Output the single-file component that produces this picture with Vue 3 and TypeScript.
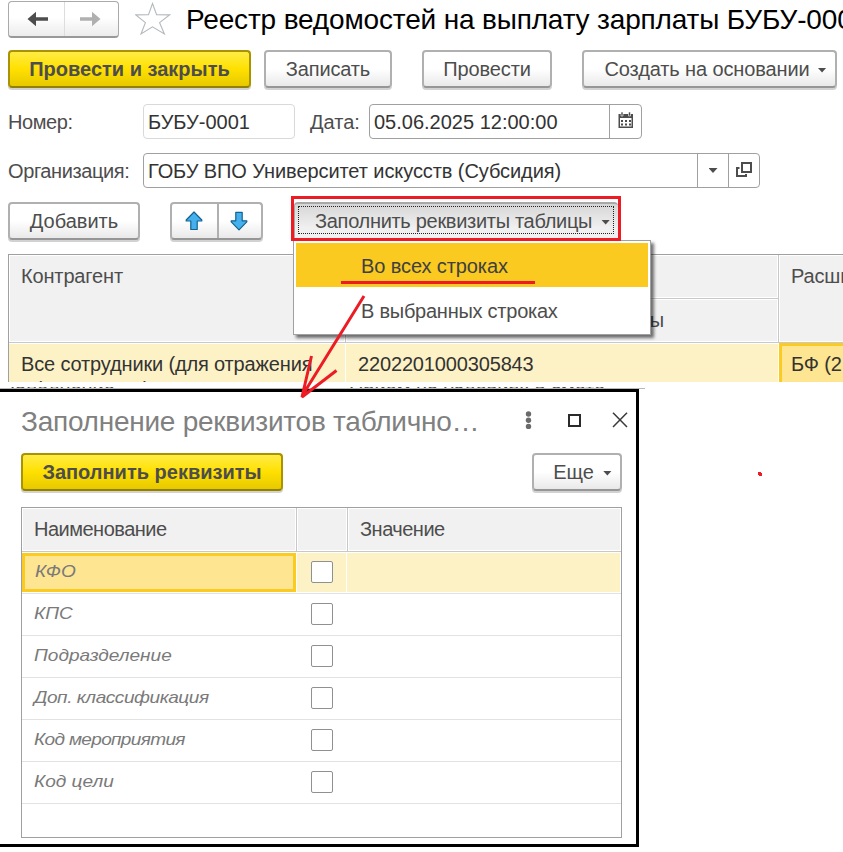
<script setup lang="ts">
import { ref } from 'vue'

interface Requisite {
  name: string
  checked: boolean
}

const requisites = ref<Requisite[]>([
  { name: 'КФО', checked: false },
  { name: 'КПС', checked: false },
  { name: 'Подразделение', checked: false },
  { name: 'Доп. классификация', checked: false },
  { name: 'Код мероприятия', checked: false },
  { name: 'Код цели', checked: false },
])
const selected = ref(0)
</script>

<template>
  <div class="page">
    <header class="title-row">
      <div class="nav">
        <button class="nav-btn">
          <svg width="22" height="16" viewBox="0 0 22 16"><path d="M0.5 8 L9 0.8 V6.2 H21 V9.8 H9 V15.2 Z" fill="#4d4d4d" /></svg>
        </button>
        <button class="nav-btn">
          <svg width="22" height="16" viewBox="0 0 22 16"><path d="M21.5 8 L13 0.8 V6.2 H1 V9.8 H13 V15.2 Z" fill="#b0b0b0" /></svg>
        </button>
      </div>
      <svg class="star" width="36" height="34" viewBox="0 0 36 34">
        <path d="M17.5 1.5 L21.6 12.8 L34.5 12.9 L24.6 20.6 L29.4 32 L17.5 24.8 L6 32 L10.4 20.6 L0.8 12.9 L13.5 12.8 Z" fill="#fff" stroke="#b4b9be" stroke-width="1.1" />
      </svg>
      <h1>Реестр ведомостей на выплату зарплаты БУБУ-0001</h1>
    </header>

    <div class="commands">
      <button class="btn primary post-close"><span>Провести и закрыть</span></button>
      <button class="btn save"><span>Записать</span></button>
      <button class="btn post"><span>Провести</span></button>
      <button class="btn create"><span>Создать на основании</span><i class="caret"></i></button>
    </div>

    <div class="field-row">
      <label class="lead">Номер:</label>
      <div class="input number"><span>БУБУ-0001</span></div>
      <label class="date-label">Дата:</label>
      <div class="input date">
        <span>05.06.2025 12:00:00</span>
        <div class="slot">
          <svg width="16" height="17" viewBox="0 0 16 17">
            <path d="M0.5 2 H15 V16 H0.5 Z" fill="#4d4d4d" />
            <path d="M2 6 H13.5 V14.5 H2 Z" fill="#fff" />
            <path d="M3 0 H5 V4 H3 Z M10.5 0 H12.5 V4 H10.5 Z" fill="#4d4d4d" stroke="#fff" stroke-width=".6" />
            <path d="M3 8h2v2h-2z M7 8h2v2h-2z M11 8h2v2h-2z M3 11.5h2v2h-2z M7 11.5h2v2h-2z M11 11.5h2v2h-2z" fill="#4d4d4d" />
          </svg>
        </div>
      </div>
    </div>

    <div class="field-row">
      <label class="lead org-label">Организация:</label>
      <div class="input org">
        <span>ГОБУ ВПО Университет искусств (Субсидия)</span>
        <div class="slot"><i class="caret"></i></div>
        <div class="slot">
          <svg width="16" height="16" viewBox="0 0 16 16" fill="none" stroke="#4d4d4d" stroke-width="2">
            <path d="M6 1 H15 V10 H6 Z M3.5 6 H1 V14 H10 V12" />
          </svg>
        </div>
      </div>
    </div>

    <div class="table-commands">
      <button class="btn add"><span>Добавить</span></button>
      <div class="btn move">
        <div class="half">
          <svg width="18" height="20" viewBox="0 0 18 20"><path d="M9 1 L16.8 9 V10 H12.2 V18.5 H5.8 V10 H1.2 V9 Z" fill="#46b0ee" stroke="#12638f" stroke-width="1.2" stroke-linejoin="round" /></svg>
        </div>
        <div class="half">
          <svg width="18" height="20" viewBox="0 0 18 20"><path d="M9 18.8 L16.8 10.8 V9.8 H12.2 V1.3 H5.8 V9.8 H1.2 V10.8 Z" fill="#46b0ee" stroke="#12638f" stroke-width="1.2" stroke-linejoin="round" /></svg>
        </div>
      </div>
      <div class="marked">
        <button class="fill-btn"><span>Заполнить реквизиты таблицы</span><i class="caret"></i></button>
      </div>
    </div>

    <section class="grid">
      <div class="cell head tall"><span>Контрагент</span></div>
      <div class="head-group">
        <div class="cell head"></div>
        <div class="cell head under"><span>ы</span></div>
      </div>
      <div class="cell head tall"><span>Расширенный</span></div>
      <div class="cell row-cell first"><p>Все сотрудники (для отражения</p><p>в (начислении)</p></div>
      <div class="cell row-cell account"><span>2202201000305843</span></div>
      <div class="cell row-cell current"><span>БФ (2</span></div>
    </section>

    <div class="remnant"><span>Заполнение</span><span>Прием на условиях в смете</span></div>

    <div class="menu">
      <div class="item active"><span>Во всех строках</span></div>
      <div class="item"><span>В выбранных строках</span></div>
    </div>

    <section class="dialog">
      <div class="dialog-head">
        <h2>Заполнение реквизитов таблично…</h2>
        <svg width="104" height="20" viewBox="0 0 104 20">
          <g fill="#6a6a6a"><circle cx="4.5" cy="4" r="2.7" /><circle cx="4.5" cy="10.2" r="2.7" /><circle cx="4.5" cy="16.4" r="2.7" /></g>
          <rect x="45" y="5" width="11" height="11" fill="none" stroke="#2b2b2b" stroke-width="2" />
          <path d="M89 2.8 L103 17 M103 2.8 L89 17" stroke="#3a3a3a" stroke-width="1.5" />
        </svg>
      </div>
      <div class="dialog-commands">
        <button class="btn primary fill"><span>Заполнить реквизиты</span></button>
        <button class="btn more"><span>Еще</span><i class="caret"></i></button>
      </div>
      <div class="list">
        <div class="line header">
          <div><span>Наименование</span></div>
          <div></div>
          <div><span>Значение</span></div>
        </div>
        <div v-for="(item, i) in requisites" :key="item.name" class="line" :class="{ selected: i === selected }" @click="selected = i">
          <div><em>{{ item.name }}</em></div>
          <div><i class="box" @click="item.checked = !item.checked"></i></div>
          <div></div>
        </div>
      </div>
    </section>

    <svg class="marks" width="843" height="852" viewBox="0 0 843 852" fill="none" stroke="#ed1c24" stroke-width="3">
      <path d="M341 282.5 H535" />
      <path d="M364 296 L302 396 M311.5 356 L302 397 L336.5 370.5" stroke-linejoin="bevel" />
      <path d="M758 472 h3 v1 h1 v3 h-3 v-1 h-1 z" fill="#ed1c24" stroke="none" />
    </svg>
  </div>
</template>

<style>
body { background: #fff; }
</style>

<style scoped>
* { box-sizing: border-box; }
.page {
  position: relative; width: 843px; height: 852px; overflow: hidden;
  background: #fff; font-family: "Liberation Sans", Arial, sans-serif;
  font-size: 20px; line-height: 24px; color: #4d4d4d; white-space: nowrap;
}
button { font: inherit; color: inherit; padding: 0; }
p { margin: 0; }
svg { display: block; flex: none; }
.title-row { display: flex; height: 50px; padding: 1px 0 0 8px; }
.nav {
  display: flex; flex: none; width: 111px; height: 37px; border: 1px solid #aaa; border-bottom: 2px solid #999;
  border-radius: 4px; background: linear-gradient(#fff 45%, #ececec);
}
.nav-btn { flex: none; width: 55px; display: flex; align-items: center; justify-content: center; border: 0; background: none; }
.nav-btn + .nav-btn { width: 54px; border-left: 1px solid #ddd; padding-right: 4px; }
.nav-btn:first-child { padding-left: 2px; }
.star { margin: 1px 0 0 16px; }
h1 { margin: 2px 0 0 15px; font-size: 28px; line-height: 33px; font-weight: 400; letter-spacing: -.16px; color: #000; }

.btn {
  display: flex; align-items: center; justify-content: center; flex: none; height: 38px;
  border: 2px solid #b0b0b0; border-bottom-color: #969696; border-radius: 4px;
  background: linear-gradient(#fff 50%, #e9e9e9); box-shadow: 0 2px 0 #d2d2d2;
}
.primary {
  border-color: #a99300; border-bottom-color: #938000; font-weight: 700;
  background: linear-gradient(#ffec45, #ffe000 50%, #e7c900);
}
.caret { flex: none; width: 9px; height: 5px; background: #4d4d4d; clip-path: polygon(0 0, 100% 0, 50% 100%); }
.commands { display: flex; height: 54px; padding-left: 8px; }
.commands .caret, .fill-btn .caret, .more .caret { position: relative; top: 1px; }
.post-close { width: 243px; margin-right: 13px; }
.save { width: 128px; margin-right: 30px; letter-spacing: -.15px; }
.post { width: 130px; margin-right: 30px; letter-spacing: -.1px; }
.create { width: 255px; padding-left: 12px; gap: 8px; letter-spacing: -.12px; }

.field-row { display: flex; height: 49px; padding-left: 8px; }
label { line-height: 36px; }
.lead { width: 135px; letter-spacing: -.4px; }
.input { display: flex; height: 35px; border: 1px solid #a0a0a0; border-radius: 4px; line-height: 34px; padding-left: 4px; color: #333; }
.input > span { flex: 1; }
.number { width: 152px; border-color: #d9d9d9; }
.date-label { width: 74px; padding-left: 15px; }
.date { width: 273px; }
.org { width: 617px; letter-spacing: -.08px; }
.slot { display: flex; align-items: center; justify-content: center; width: 32px; border-left: 1px solid #a0a0a0; }
.slot svg { margin-top: -2px; }
.org .slot { width: 31px; }

.table-commands { display: flex; height: 52px; padding-left: 8px; }
.add { width: 132px; margin-right: 30px; }
.move { width: 93px; margin-right: 28px; }
.half { flex: 1; display: flex; height: 34px; align-items: center; justify-content: center; padding-right: 2px; }
.half:first-child { flex: none; width: 45px; }
.half + .half { border-left: 2px solid #b0b0b0; }
.marked { position: relative; z-index: 1; width: 330px; height: 45px; margin-top: -6px; border: 3px solid #ed1c24; padding-top: 3px; background: #fff; }
.fill-btn {
  display: flex; align-items: center; width: 324px; height: 36px; padding-left: 20px; gap: 9px;
  border: 0; border-top: 2px solid #a8a8a8; border-left: 1px solid #a8a8a8; border-radius: 4px 4px 0 0;
  background: linear-gradient(#d6d6d6, #f0f0f0 70%); outline: 1px dotted #222; outline-offset: -5px; letter-spacing: -.3px;
}

.grid {
  display: grid; grid-template-columns: 337px 433px 100px; grid-template-rows: 88px 39px; width: 870px;
  height: 128px; margin-left: 8px; border-top: 1px solid #a0a0a0; border-left: 1px solid #a0a0a0; overflow: hidden;
}
.cell { overflow: hidden; padding-left: 12px; letter-spacing: -.15px; }
.head { background: #f1f1f1; border-right: 1px solid #c8c8c8; border-bottom: 1px solid #c8c8c8; box-shadow: inset 1px 1px #fff, inset -1px -1px #fff; padding-top: 9px; }
.head-group { display: grid; grid-template-rows: 44px 44px; }
.under { padding-top: 9px; text-align: right; padding-right: 114px; }
.row-cell { background: #fdf2c6; color: #333; padding-top: 8px; border-right: 1px solid #fff; border-top: 1px solid #fff; }
.first p + p { padding-top: 1px; letter-spacing: -.8px; }
.current { background: #fee591; border: 3px solid #fccb22; border-right: 0; border-bottom: 0; padding: 6px 0 0 9px; }
.remnant {
  display: flex; gap: 234px; height: 2px; width: 645px; margin-top: 5px; padding-left: 3px; overflow: hidden;
  border-bottom: 1px solid #b8b8b8; line-height: 6px;
}

.menu {
  position: absolute; left: 293px; top: 240px; width: 358px; height: 95px; padding: 2px;
  background: #fff; border: 1px solid #a0a0a0; box-shadow: 3px 3px 3px rgba(0, 0, 0, .55);
}
.item { height: 45px; padding-left: 65px; line-height: 48px; letter-spacing: -.25px; }
.item.active { height: 44px; background: #faca20; color: #404040; line-height: 47px; letter-spacing: -.1px; }

.dialog { position: absolute; left: 0; top: 389px; width: 639px; height: 458px; background: #fff; border: 3px solid #000; border-left: 0; }
.dialog-head { display: flex; justify-content: space-between; height: 62px; padding: 13px 8px 0 21px; }
.dialog-head svg { margin-top: 5px; }
h2 { margin: 0; font-size: 28px; line-height: 33px; font-weight: 400; letter-spacing: -.25px; color: #808080; }
.dialog-commands { display: flex; justify-content: space-between; height: 53px; padding: 0 14px 0 21px; margin-top: -1px; }
.fill { width: 262px; }
.more { width: 90px; padding-left: 11px; gap: 9px; }
.list { width: 601px; height: 331px; margin: 1px 0 0 21px; border: 1px solid #a0a0a0; }
.line { display: grid; grid-template-columns: 274px 51px 1fr; height: 42px; border-bottom: 1px solid #e2e2e2; }
.line > div { padding-left: 12px; line-height: 37px; }
.line.header { height: 44px; border-bottom-color: #c8c8c8; background: #f1f1f1; box-shadow: inset 1px 1px #fff, inset -1px -1px #fff; }
.header > div { line-height: 43px; letter-spacing: -.5px; }
.header > div + div { border-left: 1px solid #c8c8c8; box-shadow: inset 1px 0 #fff, -1px 0 #fff; }
.line > div:nth-child(2) { padding: 9px 0 0 15px; }
.line.selected > div { background: #fdf2c6; border: 1px solid #fff; border-left: 0; }
.line.selected > div:first-child { border: 3px solid #fccb22; background: #fee591; margin: 1px 0; padding-left: 10px; line-height: 29px; }
.line.selected > div:nth-child(2) { margin-left: 1px; padding: 8px 0 0 14px; }
em { display: inline-block; font-size: 17px; color: #7a7a7a; transform: scaleX(1.12); transform-origin: 0 50%; }
.line:nth-child(5) em { letter-spacing: -.4px; }
.line:nth-child(6) em { letter-spacing: -.6px; }
.box { display: block; width: 22px; height: 22px; border: 1px solid #909090; border-radius: 2px; background: #fff; }
.marks { position: absolute; left: 0; top: 0; z-index: 2; pointer-events: none; }
</style>
